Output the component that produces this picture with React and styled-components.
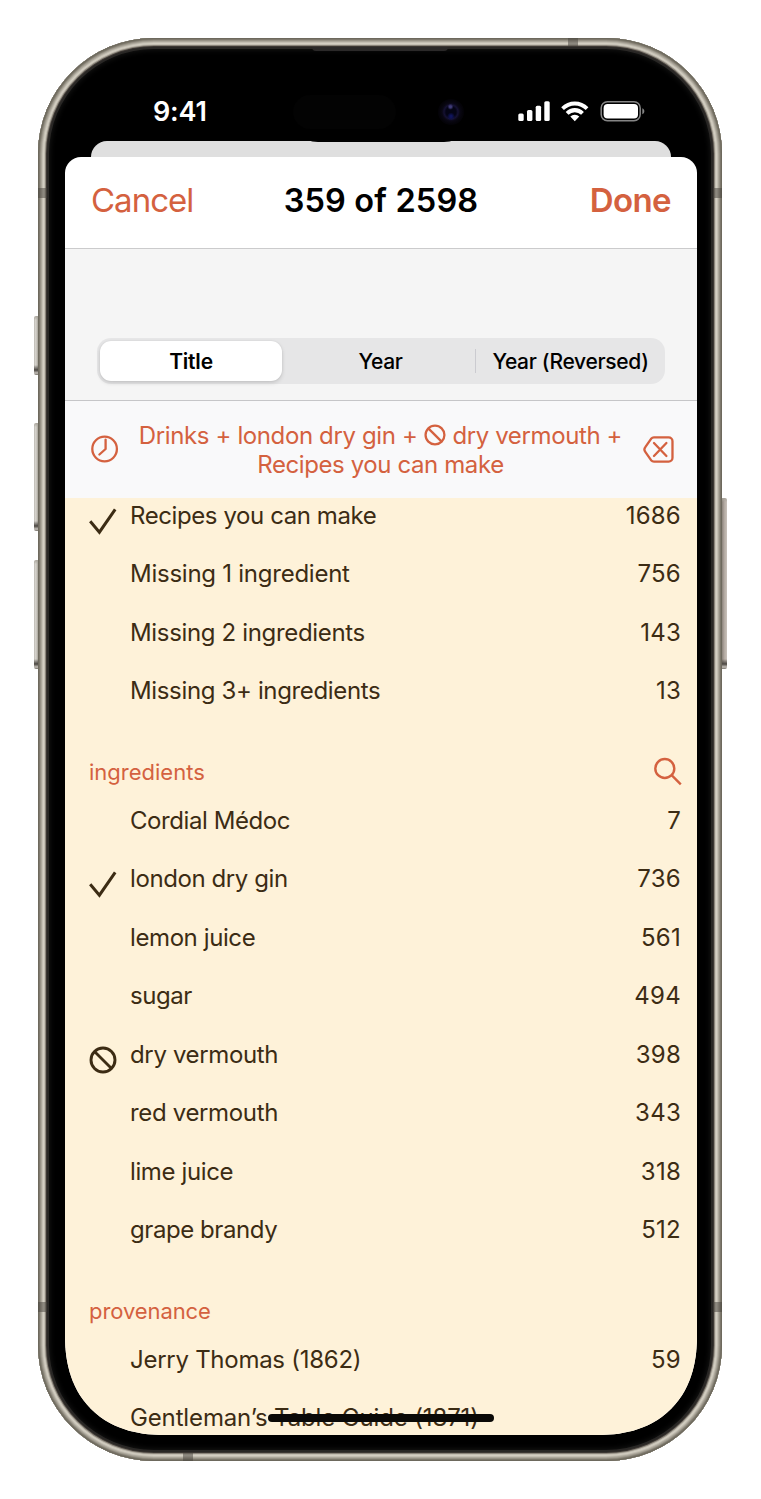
import React from "react";
import styled, { createGlobalStyle } from "styled-components";

const accent = "#d4613f";
const ink = "#3c2c14";

const GlobalStyle = createGlobalStyle`
  * { box-sizing: border-box; }
  body {
    margin: 0;
    background: #fff;
    font-family: Inter, "Liberation Sans", sans-serif;
  }
  svg { display: block; }
`;

const Page = styled.main`
  padding: 38px 39px 38px 38px;
  height: 1499px;
  overflow: hidden;
`;

const Device = styled.div`
  position: relative;
  width: 684px;
  height: 1423px;
  padding: 27px 25px 26px 27px;
  border-radius: 116px;
  background: #000;
  box-shadow:
    inset 0 0 0 1px #6d695d,
    inset 0 0 0 2px #7d786c,
    inset 0 0 0 3px #969185,
    inset 0 0 0 4px #aca79b,
    inset 0 0 0 5px #c4bfb3,
    inset 0 0 0 6px #d3cec2,
    inset 0 0 0 7px #c4bfb3,
    inset 0 0 0 8px #8a847a,
    inset 0 0 0 9px #3b3632,
    inset 0 0 0 11px #292725,
    inset 0 0 6px 11px #1c1c1b;
`;

const SideButton = styled.i`
  position: absolute;
  top: ${(p) => p.$top}px;
  height: ${(p) => p.$height}px;
  ${(p) => (p.$right ? "right: -5px;" : "left: -4px;")}
  width: ${(p) => (p.$right ? 5 : 4)}px;
  border-radius: ${(p) => (p.$right ? "0 2px 2px 0" : "2px 0 0 2px")};
  background:
    linear-gradient(#aaa69d 0, transparent 4px, transparent calc(100% - 10px), #4a4641 calc(100% - 5px), #c4bfb8 calc(100% - 2px), #77736c 100%),
    ${(p) => (p.$right
      ? "linear-gradient(90deg, #8b837b, #b3aaa2 50%, #c9c2bb)"
      : "linear-gradient(90deg, #bdbab3, #d9d6d0 45%, #a8a49a)")};
`;

const Antenna = styled.i`
  position: absolute;
  ${(p) => p.$edge}: 0;
  ${(p) => (p.$edge === "left" || p.$edge === "right"
    ? `top: ${p.$at}px; width: 9px; height: 10px;`
    : `left: ${p.$at}px; width: 10px; height: 8px;`)}
  background: rgba(70, 66, 60, 0.5);
`;

const Speaker = styled.i`
  position: absolute;
  top: 9px;
  left: 274px;
  width: 136px;
  height: 4px;
  border-radius: 0 0 4px 4px;
  background: #2b2929;
`;

const Screen = styled.div`
  position: relative;
  display: flex;
  flex-direction: column;
  height: 1370px;
  overflow: hidden;
  border-radius: 80px 80px 100px 100px;
  corner-shape: superellipse(1.2);
  background: #000;
`;

const StatusBar = styled.div`
  display: flex;
  flex: none;
  align-items: center;
  height: 76px;
  padding: 16px 52px 0 88px;
  color: #fff;
`;

const Time = styled.time`
  flex: 1;
  margin-top: 1px;
  font-size: 27px;
  font-weight: 600;
  letter-spacing: -0.2px;
`;

const Island = styled.div`
  position: absolute;
  z-index: 1;
  top: 19px;
  left: 224px;
  display: flex;
  align-items: center;
  justify-content: space-between;
  width: 184px;
  height: 58px;
  padding: 0 9px 3px 4px;
  border-radius: 29px;
  background: #000;
`;

const Sensor = styled.i`
  width: 103px;
  height: 34px;
  border-radius: 17px;
  background: #030303;
`;

const Camera = styled.i`
  width: 26px;
  height: 26px;
  border-radius: 50%;
  background: radial-gradient(circle at 48% 30%, #403c78 0 1px, transparent 3px),
    radial-gradient(circle at 50% 67%, #10145c 0 1px, transparent 4px),
    radial-gradient(circle, #040415 0 5px, #151132 7px, #090713 9px, #040308 12px);
`;

const BackSheet = styled.div`
  flex: none;
  height: 16px;
  margin: 0 26px;
  border-radius: 16px 16px 0 0;
  background: #dfdfdf;
`;

const Sheet = styled.section`
  display: flex;
  flex: 1;
  flex-direction: column;
  min-height: 0;
  overflow: hidden;
  border-radius: 16px 16px 0 0;
  background: #fff;
`;

const NavBar = styled.header`
  display: grid;
  flex: none;
  grid-template-columns: 1fr auto 1fr;
  align-items: baseline;
  height: 92px;
  padding: 23px 26px 0;
  border-bottom: 1px solid #cbcbcc;
`;

const Title = styled.h1`
  margin: 0;
  color: #000;
  font-size: 32.5px;
  font-weight: 600;
  letter-spacing: 0.15px;
  white-space: nowrap;
`;

const NavButton = styled.button`
  padding: 0;
  border: 0;
  background: none;
  color: ${accent};
  font: inherit;
  font-size: 33px;
  font-weight: ${(p) => (p.$strong ? 600 : 400)};
  letter-spacing: ${(p) => p.$track}px;
  text-align: ${(p) => (p.$strong ? "right" : "left")};
`;

const SortPanel = styled.div`
  flex: none;
  height: 152px;
  padding: 89px 32px 0;
  border-bottom: 1px solid #c6c6c8;
  background: #f5f5f5;
`;

const Segments = styled.div`
  display: grid;
  grid-template-columns: 182px 1fr 189px;
  height: 46px;
  padding: 3px 0 3px 3px;
  border-radius: 14px;
  background: #e6e6e7;
`;

const Segment = styled.button`
  display: flex;
  position: relative;
  align-items: center;
  justify-content: center;
  padding: 1px 0 0 ${(p) => p.$inset || 0}px;
  border: 0;
  border-radius: 11px;
  background: ${(p) => (p.$active ? "#fff" : "transparent")};
  box-shadow: ${(p) => (p.$active ? "0 2px 4px rgba(0,0,0,.14), 0 0 2px rgba(0,0,0,.08)" : "none")};
  color: #000;
  font: inherit;
  font-size: 21px;
  font-weight: ${(p) => (p.$active ? 600 : 500)};
  letter-spacing: ${(p) => p.$track}px;
  white-space: nowrap;

  &::before {
    content: "";
    display: ${(p) => (p.$divided ? "block" : "none")};
    position: absolute;
    left: -1px;
    top: 8px;
    width: 1px;
    height: 24px;
    background: #cbcbd0;
  }
`;

const QueryBar = styled.div`
  display: flex;
  flex: none;
  align-items: center;
  justify-content: space-between;
  height: 97px;
  padding: 0 23px 1px 26px;
  background: #f9f9fa;
  color: ${accent};
`;

const Query = styled.p`
  margin: 2px 0 0 -1px;
  font-size: 24px;
  line-height: 29px;
  text-align: center;
  white-space: nowrap;
`;

const QueryLine = styled.span`
  display: flex;
  align-items: center;
  justify-content: center;
  gap: 6.5px;
  letter-spacing: ${(p) => p.$track}px;

  svg { margin-bottom: 2px; }
`;

const List = styled.div`
  flex: 1;
  min-height: 0;
  overflow: hidden;
  background: #fef2d9;
`;

const Scrolled = styled.div`
  margin-top: -12px;
`;

const Row = styled.div`
  display: grid;
  grid-template-columns: 41px 1fr auto;
  align-items: center;
  height: 58.5px;
  padding: 0 16px 0 24px;
  color: ${ink};
  font-size: 24px;
`;

const Mark = styled.span`
  padding-top: 12px;
`;

const Label = styled.span`
  letter-spacing: ${(p) => p.$track}px;
  white-space: nowrap;
`;

const Count = styled.span`
  letter-spacing: 0.25px;
`;

const GroupHeader = styled.div`
  display: flex;
  align-items: center;
  justify-content: space-between;
  height: 71px;
  padding: 32px 14px 0 24px;
  color: ${accent};
  font-size: 22px;
  letter-spacing: ${(p) => p.$track}px;
`;

const HomeIndicator = styled.div`
  position: absolute;
  bottom: 13px;
  left: 203px;
  width: 226px;
  height: 8px;
  border-radius: 4px;
  background: #0a0907;
`;

const Status = () => (
  <svg width="128" height="24" viewBox="0 0 128 24" fill="#fff">
    <rect x="1.3" y="14.5" width="5.4" height="7.5" rx="1.5" />
    <rect x="10" y="11" width="5.4" height="11" rx="1.5" />
    <rect x="18.7" y="6.7" width="5.4" height="15.3" rx="1.5" />
    <rect x="27.3" y="2.2" width="5.4" height="19.8" rx="1.5" />
    <path d="M44.2 8.3a19 19 0 0 1 27.2 0l-2.7 2.8a15.2 15.2 0 0 0-21.8 0zM48.7 13a12.6 12.6 0 0 1 18.2 0l-2.8 2.8a8.9 8.9 0 0 0-12.6 0zM53.3 17.5a6.4 6.4 0 0 1 9 0l-4.5 4.7z" />
    <rect x="84.2" y="2.7" width="39" height="19" rx="6.2" fill="none" stroke="#858585" strokeWidth="1.5" />
    <rect x="86.6" y="5" width="34.4" height="14.5" rx="4" />
    <path d="M125.3 9.2c2.7 1 2.7 5 0 6z" fill="#858585" />
  </svg>
);

const Check = () => (
  <svg width="29" height="29" viewBox="0 0 29 29" fill="none" stroke={ink} strokeWidth="3">
    <path d="M1.2 14.3 10.4 25.2 26.2 2.4" strokeLinejoin="miter" />
  </svg>
);

const Ban = ({ size, color, weight }) => (
  <svg width={size} height={size} viewBox="0 0 28 28" fill="none" stroke={color} strokeWidth={weight}>
    <circle cx="14" cy="14" r="12" />
    <path d="m5.5 5.5 17 17" />
  </svg>
);

const Clock = () => (
  <svg width="28" height="28" viewBox="0 0 28 28" fill="none" stroke={accent} strokeWidth="2.3">
    <circle cx="13.6" cy="14" r="12.3" />
    <path d="M14.6 4.6V14l-6.2 5.5" strokeLinecap="round" strokeLinejoin="round" />
  </svg>
);

const Clear = () => (
  <svg width="31" height="27" viewBox="0 0 32 28" fill="none" stroke={accent} strokeWidth="2.4" strokeLinecap="round" strokeLinejoin="round">
    <path d="M11.3 1.5h15.2a4 4 0 0 1 4 4v17a4 4 0 0 1-4 4H11.3c-1.2 0-2.2-.5-3-1.4l-6-8.7c-1.2-1.5-1.2-3.2 0-4.8l6-8.7c.8-.9 1.8-1.4 3-1.4z" />
    <path d="m11.3 7.3 12.9 13.4m0-13.4L11.3 20.7" />
  </svg>
);

const Search = () => (
  <svg width="30" height="30" viewBox="0 0 30 30" fill="none" stroke={accent} strokeWidth="2.4">
    <circle cx="11.8" cy="11.5" r="9.5" />
    <path d="m18.6 18.2 9.2 9.2" />
  </svg>
);

const groups = [
  {
    rows: [
      ["Recipes you can make", "1686", -0.41, "check"],
      ["Missing 1 ingredient", "756", -0.25],
      ["Missing 2 ingredients", "143", -0.34],
      ["Missing 3+ ingredients", "13", -0.35],
    ],
  },
  {
    name: "ingredients",
    track: 0,
    search: true,
    rows: [
      ["Cordial Médoc", "7", -0.42],
      ["london dry gin", "736", -0.41, "check"],
      ["lemon juice", "561", -0.4],
      ["sugar", "494", -0.45],
      ["dry vermouth", "398", -0.36, "ban"],
      ["red vermouth", "343", -0.34],
      ["lime juice", "318", -0.38],
      ["grape brandy", "512", -0.43],
    ],
  },
  {
    name: "provenance",
    track: -0.08,
    rows: [
      ["Jerry Thomas (1862)", "59", -0.27],
      ["Gentleman’s Table Guide (1871)", "", -0.14],
    ],
  },
];

export default function App() {
  return (
    <Page>
      <GlobalStyle />
      <Device>
        <SideButton $top={278} $height={59} />
        <SideButton $top={385} $height={108} />
        <SideButton $top={522} $height={109} />
        <SideButton $top={460} $height={171} $right />
        <Antenna $edge="left" $at={150} />
        <Antenna $edge="right" $at={150} />
        <Antenna $edge="left" $at={1264} />
        <Antenna $edge="right" $at={1264} />
        <Antenna $edge="top" $at={530} />
        <Antenna $edge="bottom" $at={145} />
        <Speaker />
        <Screen>
          <StatusBar>
            <Time>9:41</Time>
            <Status />
          </StatusBar>
          <Island>
            <Sensor />
            <Camera />
          </Island>
          <BackSheet />
          <Sheet>
            <NavBar>
              <NavButton $track={-1}>Cancel</NavButton>
              <Title>359 of 2598</Title>
              <NavButton $strong $track={-0.6}>Done</NavButton>
            </NavBar>
            <SortPanel>
              <Segments>
                <Segment $active $track={-0.2}>Title</Segment>
                <Segment $inset={3} $track={-0.4}>Year</Segment>
                <Segment $divided $track={-0.3}>Year (Reversed)</Segment>
              </Segments>
            </SortPanel>
            <QueryBar>
              <Clock />
              <Query>
                <QueryLine $track={-0.38}>
                  Drinks + london dry gin +
                  <Ban size={22} color={accent} weight={2.9} />
                  dry vermouth +
                </QueryLine>
                <QueryLine $track={-0.4}>Recipes you can make</QueryLine>
              </Query>
              <Clear />
            </QueryBar>
            <List>
              <Scrolled>
                {groups.map((group, i) => (
                  <React.Fragment key={i}>
                    {group.name && (
                      <GroupHeader $track={group.track}>
                        {group.name}
                        {group.search && <Search />}
                      </GroupHeader>
                    )}
                    {group.rows.map(([label, count, track, mark]) => (
                      <Row key={label}>
                        <Mark>
                          {mark === "check" && <Check />}
                          {mark === "ban" && <Ban size={28} color={ink} weight={2.9} />}
                        </Mark>
                        <Label $track={track}>{label}</Label>
                        <Count>{count}</Count>
                      </Row>
                    ))}
                  </React.Fragment>
                ))}
              </Scrolled>
            </List>
          </Sheet>
          <HomeIndicator />
        </Screen>
      </Device>
    </Page>
  );
}
